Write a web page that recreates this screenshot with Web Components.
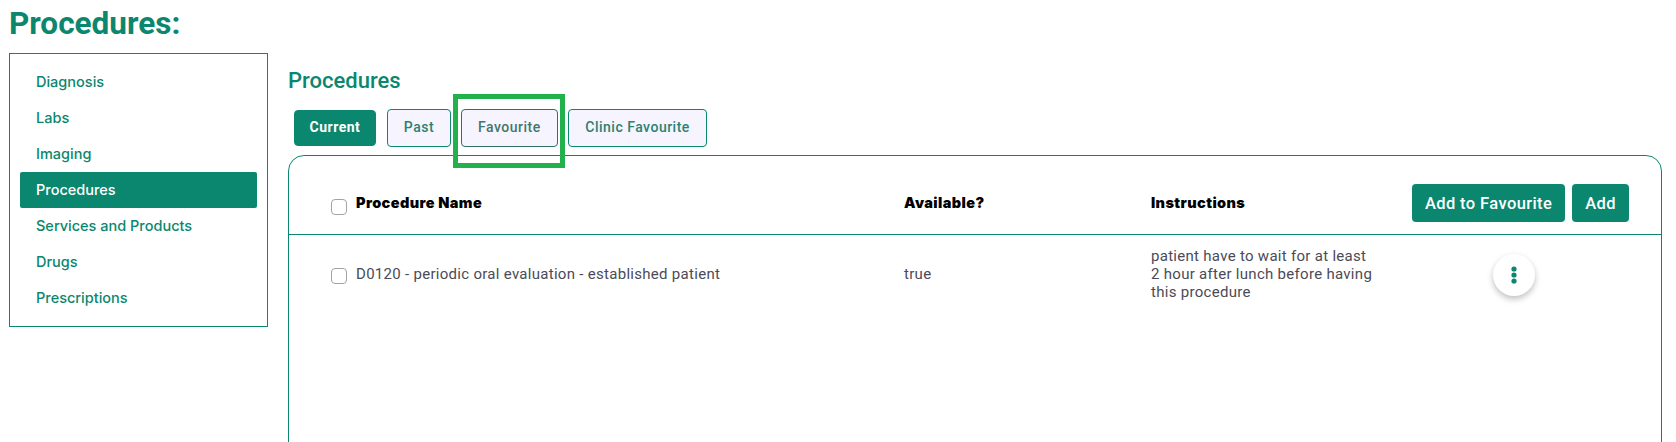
<!DOCTYPE html>
<html>
<head>
<meta charset="utf-8">
<style>
  html, body { margin: 0; height: 442px; overflow: hidden; background: #fff; }
  body { font-family: Roboto, sans-serif; }
</style>
</head>
<body>
<procedures-page></procedures-page>

<script>
class SideNav extends HTMLElement {
  constructor() {
    super();
    this.attachShadow({ mode: 'open' });
    let items = ['Diagnosis', 'Labs', 'Imaging', 'Procedures', 'Services and Products', 'Drugs', 'Prescriptions'];
    let active = this.getAttribute('active');
    this.shadowRoot.innerHTML = `
      <style>
        :host {
          display: block;
          box-sizing: border-box;
          width: 259px;
          height: 274px;
          border: 1px solid #0a876e;
          padding: 10px;
          font: 500 14.5px Inter, sans-serif;
          color: #0a876e;
        }
        a {
          display: flex;
          align-items: center;
          height: 36px;
          padding: 0 0 2px 16px;
          box-sizing: border-box;
          border-radius: 2px;
        }
        a.active { background: #0a876e; color: #fff; }
      </style>
      ${items.map((i) => `<a class="${i === active ? 'active' : ''}">${i}</a>`).join('')}
    `;
  }
}
customElements.define('side-nav', SideNav);

class TabButton extends HTMLElement {
  constructor() {
    super();
    this.attachShadow({ mode: 'open' });
    this.shadowRoot.innerHTML = `
      <style>
        :host {
          display: inline-flex;
          position: relative;
          align-items: center;
          box-sizing: border-box;
          height: 38px;
          padding: 0 16px 2px;
          border: 1px solid #0a876e;
          border-radius: 4px;
          background: #f6f4ff;
          color: #2b8271;
          font: 500 14px Roboto, sans-serif;
          letter-spacing: 0.5px;
        }
        :host([selected]) {
          height: 36px;
          padding: 0 14.5px 2px;
          background: #0a876e;
          border-color: #0a876e;
          color: #fff;
          font-weight: 700;
        }
        :host([marked]) { border-color: #2f6f66; color: #44766c; }
        :host([wide]) { padding: 0 16.5px 2px; }
        .mark {
          display: none;
          position: absolute;
          left: -9px;
          right: -8px;
          top: -16px;
          bottom: -22px;
          border: 5px solid #22b14c;
        }
        :host([marked]) .mark { display: block; }
      </style>
      <slot></slot>
      <span class="mark"></span>
    `;
  }
}
customElements.define('tab-button', TabButton);

class CheckBox extends HTMLElement {
  constructor() {
    super();
    this.attachShadow({ mode: 'open' });
    this.shadowRoot.innerHTML = `
      <style>
        :host {
          display: block;
          box-sizing: border-box;
          width: 16px;
          height: 16px;
          border: 1px solid #a3a3a3;
          border-radius: 4px;
          background: #fff;
        }
      </style>
    `;
  }
}
customElements.define('check-box', CheckBox);

class ActionButton extends HTMLElement {
  constructor() {
    super();
    this.attachShadow({ mode: 'open' });
    this.shadowRoot.innerHTML = `
      <style>
        :host {
          display: inline-flex;
          align-items: center;
          box-sizing: border-box;
          height: 38px;
          padding: 0 13px;
          border-radius: 4px;
          background: #0a876e;
          color: #fff;
          font: 500 16.5px Roboto, sans-serif;
        }
      </style>
      <slot></slot>
    `;
  }
}
customElements.define('action-button', ActionButton);

class KebabButton extends HTMLElement {
  constructor() {
    super();
    this.attachShadow({ mode: 'open' });
    this.shadowRoot.innerHTML = `
      <style>
        :host {
          display: flex;
          align-items: center;
          justify-content: center;
          width: 42px;
          height: 42px;
          border-radius: 50%;
          background: #fff;
          box-shadow: 0 3px 6px rgba(0, 0, 0, 0.25);
        }
      </style>
      <svg width="6" height="18" viewBox="0 0 6 18" fill="#0a876e">
        <circle cx="3" cy="3" r="2.6"/><circle cx="3" cy="9" r="2.6"/><circle cx="3" cy="15" r="2.6"/>
      </svg>
    `;
  }
}
customElements.define('kebab-button', KebabButton);

class ProcedureTable extends HTMLElement {
  constructor() {
    super();
    this.attachShadow({ mode: 'open' });
    this.shadowRoot.innerHTML = `
      <style>
        :host {
          display: block;
          box-sizing: border-box;
          width: 1374px;
          height: 320px;
          border: 1px solid #0a876e;
          border-radius: 16px;
        }
        .row {
          display: grid;
          grid-template-columns: 16px 557px 247px 1fr;
          padding-left: 42px;
          padding-right: 32px;
        }
        .head {
          height: 79px;
          padding-top: 16px;
          align-items: center;
          border-bottom: 1px solid #0a876e;
          box-sizing: border-box;
          color: #000;
          font: 900 14.5px Inter, sans-serif;
          letter-spacing: 0.4px;
        }
        .head check-box { margin-top: 7px; }
        .head .name, .body .name { padding-left: 9px; }
        .head .cell { margin-top: -1px; }
        .tools {
          display: flex;
          justify-content: flex-end;
          align-items: center;
          gap: 7px;
        }
        .split {
          display: flex;
          justify-content: space-between;
          align-items: center;
        }
        .body {
          padding-top: 12px;
          align-items: center;
          color: #4b4b57;
          font: 400 15px/18px Roboto, sans-serif;
          letter-spacing: 0.29px;
        }
        .body check-box { margin-top: 3px; }
        .body .note { width: 225px; }
        .body kebab-button { margin: 2px 94px 0 0; }
      </style>
      <div class="row head">
        <check-box></check-box>
        <div class="cell name">Procedure Name</div>
        <div class="cell">Available?</div>
        <div class="split">
          <div class="cell">Instructions</div>
          <div class="tools">
            <action-button>Add to Favourite</action-button>
            <action-button>Add</action-button>
          </div>
        </div>
      </div>
      <div class="row body">
        <check-box></check-box>
        <div class="name">D0120 - periodic oral evaluation - established patient</div>
        <div>true</div>
        <div class="split">
          <div class="note">patient have to wait for at least 2 hour after lunch before having this procedure</div>
          <kebab-button></kebab-button>
        </div>
      </div>
    `;
  }
}
customElements.define('procedure-table', ProcedureTable);

class ProceduresPage extends HTMLElement {
  constructor() {
    super();
    this.attachShadow({ mode: 'open' });
    this.shadowRoot.innerHTML = `
      <style>
        :host {
          display: block;
          padding: 5px 0 0 9px;
          font-family: Roboto, sans-serif;
        }
        h1 {
          margin: 0 0 10px;
          font: 700 31.5px/38px Roboto, sans-serif;
          color: #0a876e;
        }
        .layout { display: flex; gap: 20px; align-items: flex-start; }
        h2 {
          margin: 0 0 13px;
          font: 500 22px/30px Roboto, sans-serif;
          color: #0a876e;
        }
        .main { padding-top: 13px; }
        .tabs {
          display: flex;
          align-items: center;
          gap: 10px;
          margin: 0 0 8px 6px;
        }
        .tabs tab-button:first-child { margin-right: 1px; }
      </style>
      <h1>Procedures:</h1>
      <div class="layout">
        <side-nav active="Procedures"></side-nav>
        <div class="main">
          <h2>Procedures</h2>
          <div class="tabs">
            <tab-button selected>Current</tab-button>
            <tab-button>Past</tab-button>
            <tab-button marked>Favourite</tab-button>
            <tab-button wide>Clinic Favourite</tab-button>
          </div>
          <procedure-table></procedure-table>
        </div>
      </div>
    `;
  }
}
customElements.define('procedures-page', ProceduresPage);
</script>
</body>
</html>
